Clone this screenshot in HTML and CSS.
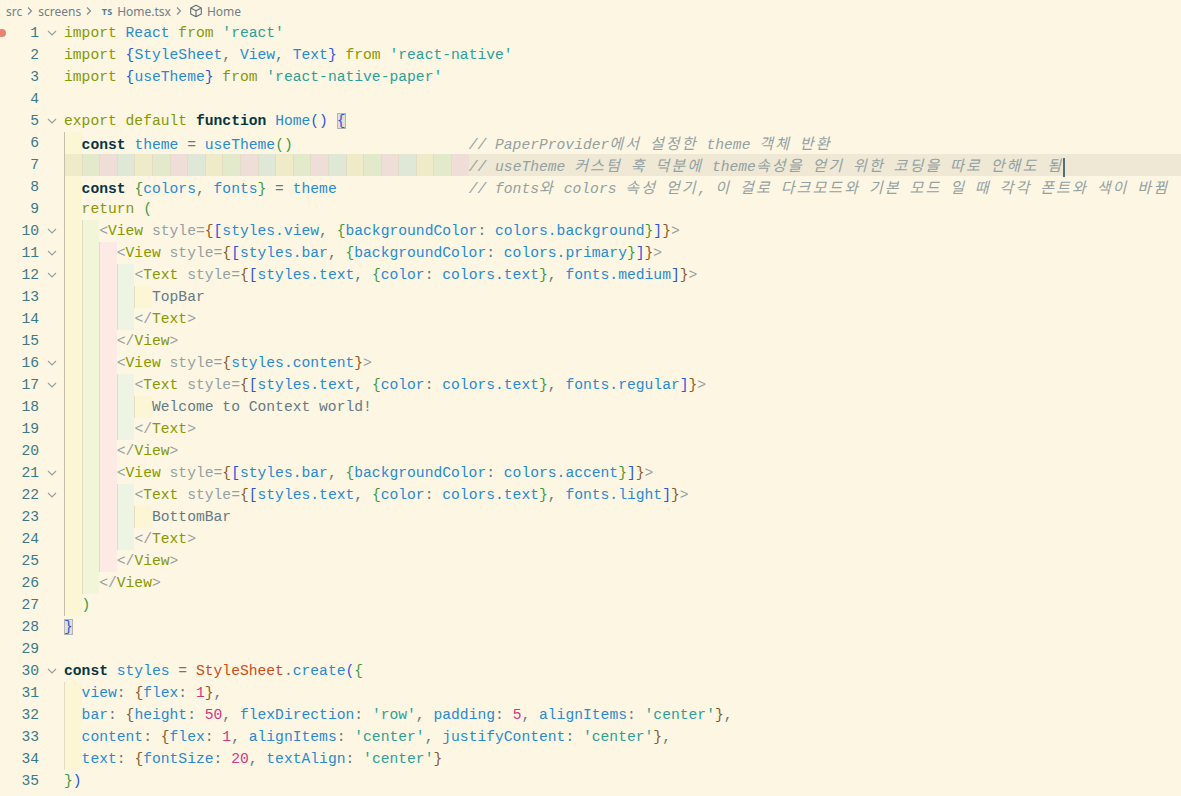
FILE: index.html
```html
<!DOCTYPE html>
<html lang="ko">
<head>
    <meta charset="UTF-8">
    <title>Home.tsx</title>
    <link rel="stylesheet" href="styles.css">
</head>
<body>
    <div class="crumbs">
        <span>src</span>
        <svg class="chev" width="16" height="10" viewBox="0 0 16 10"><path d="M6 1.5l3.5 3.5-3.5 3.5" fill="none" stroke="#7c8b90" stroke-width="1.1"/></svg>
        <span>screens</span>
        <svg class="chev" width="16" height="10" viewBox="0 0 16 10"><path d="M6 1.5l3.5 3.5-3.5 3.5" fill="none" stroke="#7c8b90" stroke-width="1.1"/></svg>
        <span class="ts">TS</span>
        <span>Home.tsx</span>
        <svg class="chev" width="16" height="10" viewBox="0 0 16 10"><path d="M6 1.5l3.5 3.5-3.5 3.5" fill="none" stroke="#7c8b90" stroke-width="1.1"/></svg>
        <svg class="cube" width="14" height="14" viewBox="0 0 14 14"><path d="M7 1.2l5.3 2.8v6L7 12.8 1.7 10V4zM1.7 4L7 6.8 12.3 4M7 6.8v6" fill="none" stroke="#5f6f74" stroke-width="1.1" stroke-linejoin="round"/></svg>
        <span>Home</span>
    </div>

    <div class="editor">
        <div class="ln"><div class="gut"><span class="bp"></span><span class="num">1</span><span class="fold"><svg width="10" height="6" viewBox="0 0 10 6"><path d="M1 1l4 4 4-4"/></svg></span></div><div class="code"><span class="k">import</span> <span class="v">React</span> <span class="k">from</span> <span class="q">'react'</span></div></div>
        <div class="ln"><div class="gut"><span class="num">2</span><span class="fold"></span></div><div class="code"><span class="k">import</span> <span class="b1">{</span><span class="v">StyleSheet</span>, <span class="v">View</span>, <span class="v">Text</span><span class="b1">}</span> <span class="k">from</span> <span class="q">'react-native'</span></div></div>
        <div class="ln"><div class="gut"><span class="num">3</span><span class="fold"></span></div><div class="code"><span class="k">import</span> <span class="b1">{</span><span class="v">useTheme</span><span class="b1">}</span> <span class="k">from</span> <span class="q">'react-native-paper'</span></div></div>
        <div class="ln"><div class="gut"><span class="num">4</span><span class="fold"></span></div><div class="code"></div></div>
        <div class="ln"><div class="gut"><span class="num">5</span><span class="fold"><svg width="10" height="6" viewBox="0 0 10 6"><path d="M1 1l4 4 4-4"/></svg></span></div><div class="code"><span class="k">export</span> <span class="k">default</span> <span class="s">function</span> <span class="v">Home</span><span class="b1">()</span> <span class="b1 match">{</span></div></div>
        <div class="ln"><div class="gut"><span class="num">6</span><span class="fold"></span></div><div class="code"><span class="ind i1 act"></span><span class="s">const</span> <span class="v">theme</span> = <span class="v">useTheme</span><span class="b2">()</span>                    <span class="c">// PaperProvider<span class="ko">에서</span> <span class="ko">설정한</span> theme <span class="ko">객체</span> <span class="ko">반환</span></span></div></div>
        <div class="ln cur"><div class="gut"><span class="num">7</span><span class="fold"></span></div><div class="code"><span class="ind i1 act"></span><span class="ind i2"></span><span class="ind i3"></span><span class="ind i4"></span><span class="ind i1"></span><span class="ind i2"></span><span class="ind i3"></span><span class="ind i4"></span><span class="ind i1"></span><span class="ind i2"></span><span class="ind i3"></span><span class="ind i4"></span><span class="ind i1"></span><span class="ind i2"></span><span class="ind i3"></span><span class="ind i4"></span><span class="ind i1"></span><span class="ind i2"></span><span class="ind i3"></span><span class="ind i4"></span><span class="ind i1"></span><span class="ind i2"></span><span class="ind i3"></span><span class="c">// useTheme <span class="ko">커스텀</span> <span class="ko">훅</span> <span class="ko">덕분에</span> theme<span class="ko">속성을</span> <span class="ko">얻기</span> <span class="ko">위한</span> <span class="ko">코딩을</span> <span class="ko">따로</span> <span class="ko">안해도</span> <span class="ko">됨</span></span><span class="caret"></span></div></div>
        <div class="ln"><div class="gut"><span class="num">8</span><span class="fold"></span></div><div class="code"><span class="ind i1 act"></span><span class="s">const</span> <span class="b2">{</span><span class="v">colors</span>, <span class="v">fonts</span><span class="b2">}</span> = <span class="v">theme</span>               <span class="c">// fonts<span class="ko">와</span> colors <span class="ko">속성</span> <span class="ko">얻기</span>, <span class="ko">이</span> <span class="ko">걸로</span> <span class="ko">다크모드와</span> <span class="ko">기본</span> <span class="ko">모드</span> <span class="ko">일</span> <span class="ko">때</span> <span class="ko">각각</span> <span class="ko">폰트와</span> <span class="ko">색이</span> <span class="ko">바뀜</span></span></div></div>
        <div class="ln"><div class="gut"><span class="num">9</span><span class="fold"></span></div><div class="code"><span class="ind i1 act"></span><span class="k">return</span> <span class="b2">(</span></div></div>
        <div class="ln"><div class="gut"><span class="num">10</span><span class="fold"><svg width="10" height="6" viewBox="0 0 10 6"><path d="M1 1l4 4 4-4"/></svg></span></div><div class="code"><span class="ind i1 act"></span><span class="ind i2"></span><span class="a">&lt;</span><span class="t">View</span> <span class="a">style=</span><span class="b3">{</span><span class="b1">[</span><span class="v">styles.view</span>, <span class="b2">{</span><span class="v">backgroundColor</span>: <span class="v">colors.background</span><span class="b2">}</span><span class="b1">]</span><span class="b3">}</span><span class="a">&gt;</span></div></div>
        <div class="ln"><div class="gut"><span class="num">11</span><span class="fold"><svg width="10" height="6" viewBox="0 0 10 6"><path d="M1 1l4 4 4-4"/></svg></span></div><div class="code"><span class="ind i1 act"></span><span class="ind i2"></span><span class="ind i3"></span><span class="a">&lt;</span><span class="t">View</span> <span class="a">style=</span><span class="b3">{</span><span class="b1">[</span><span class="v">styles.bar</span>, <span class="b2">{</span><span class="v">backgroundColor</span>: <span class="v">colors.primary</span><span class="b2">}</span><span class="b1">]</span><span class="b3">}</span><span class="a">&gt;</span></div></div>
        <div class="ln"><div class="gut"><span class="num">12</span><span class="fold"><svg width="10" height="6" viewBox="0 0 10 6"><path d="M1 1l4 4 4-4"/></svg></span></div><div class="code"><span class="ind i1 act"></span><span class="ind i2"></span><span class="ind i3"></span><span class="ind i4"></span><span class="a">&lt;</span><span class="t">Text</span> <span class="a">style=</span><span class="b3">{</span><span class="b1">[</span><span class="v">styles.text</span>, <span class="b2">{</span><span class="v">color</span>: <span class="v">colors.text</span><span class="b2">}</span>, <span class="v">fonts.medium</span><span class="b1">]</span><span class="b3">}</span><span class="a">&gt;</span></div></div>
        <div class="ln"><div class="gut"><span class="num">13</span><span class="fold"></span></div><div class="code"><span class="ind i1 act"></span><span class="ind i2"></span><span class="ind i3"></span><span class="ind i4"></span><span class="ind i1"></span>TopBar</div></div>
        <div class="ln"><div class="gut"><span class="num">14</span><span class="fold"></span></div><div class="code"><span class="ind i1 act"></span><span class="ind i2"></span><span class="ind i3"></span><span class="ind i4"></span><span class="a">&lt;/</span><span class="t">Text</span><span class="a">&gt;</span></div></div>
        <div class="ln"><div class="gut"><span class="num">15</span><span class="fold"></span></div><div class="code"><span class="ind i1 act"></span><span class="ind i2"></span><span class="ind i3"></span><span class="a">&lt;/</span><span class="t">View</span><span class="a">&gt;</span></div></div>
        <div class="ln"><div class="gut"><span class="num">16</span><span class="fold"><svg width="10" height="6" viewBox="0 0 10 6"><path d="M1 1l4 4 4-4"/></svg></span></div><div class="code"><span class="ind i1 act"></span><span class="ind i2"></span><span class="ind i3"></span><span class="a">&lt;</span><span class="t">View</span> <span class="a">style=</span><span class="b3">{</span><span class="v">styles.content</span><span class="b3">}</span><span class="a">&gt;</span></div></div>
        <div class="ln"><div class="gut"><span class="num">17</span><span class="fold"><svg width="10" height="6" viewBox="0 0 10 6"><path d="M1 1l4 4 4-4"/></svg></span></div><div class="code"><span class="ind i1 act"></span><span class="ind i2"></span><span class="ind i3"></span><span class="ind i4"></span><span class="a">&lt;</span><span class="t">Text</span> <span class="a">style=</span><span class="b3">{</span><span class="b1">[</span><span class="v">styles.text</span>, <span class="b2">{</span><span class="v">color</span>: <span class="v">colors.text</span><span class="b2">}</span>, <span class="v">fonts.regular</span><span class="b1">]</span><span class="b3">}</span><span class="a">&gt;</span></div></div>
        <div class="ln"><div class="gut"><span class="num">18</span><span class="fold"></span></div><div class="code"><span class="ind i1 act"></span><span class="ind i2"></span><span class="ind i3"></span><span class="ind i4"></span><span class="ind i1"></span>Welcome to Context world!</div></div>
        <div class="ln"><div class="gut"><span class="num">19</span><span class="fold"></span></div><div class="code"><span class="ind i1 act"></span><span class="ind i2"></span><span class="ind i3"></span><span class="ind i4"></span><span class="a">&lt;/</span><span class="t">Text</span><span class="a">&gt;</span></div></div>
        <div class="ln"><div class="gut"><span class="num">20</span><span class="fold"></span></div><div class="code"><span class="ind i1 act"></span><span class="ind i2"></span><span class="ind i3"></span><span class="a">&lt;/</span><span class="t">View</span><span class="a">&gt;</span></div></div>
        <div class="ln"><div class="gut"><span class="num">21</span><span class="fold"><svg width="10" height="6" viewBox="0 0 10 6"><path d="M1 1l4 4 4-4"/></svg></span></div><div class="code"><span class="ind i1 act"></span><span class="ind i2"></span><span class="ind i3"></span><span class="a">&lt;</span><span class="t">View</span> <span class="a">style=</span><span class="b3">{</span><span class="b1">[</span><span class="v">styles.bar</span>, <span class="b2">{</span><span class="v">backgroundColor</span>: <span class="v">colors.accent</span><span class="b2">}</span><span class="b1">]</span><span class="b3">}</span><span class="a">&gt;</span></div></div>
        <div class="ln"><div class="gut"><span class="num">22</span><span class="fold"><svg width="10" height="6" viewBox="0 0 10 6"><path d="M1 1l4 4 4-4"/></svg></span></div><div class="code"><span class="ind i1 act"></span><span class="ind i2"></span><span class="ind i3"></span><span class="ind i4"></span><span class="a">&lt;</span><span class="t">Text</span> <span class="a">style=</span><span class="b3">{</span><span class="b1">[</span><span class="v">styles.text</span>, <span class="b2">{</span><span class="v">color</span>: <span class="v">colors.text</span><span class="b2">}</span>, <span class="v">fonts.light</span><span class="b1">]</span><span class="b3">}</span><span class="a">&gt;</span></div></div>
        <div class="ln"><div class="gut"><span class="num">23</span><span class="fold"></span></div><div class="code"><span class="ind i1 act"></span><span class="ind i2"></span><span class="ind i3"></span><span class="ind i4"></span><span class="ind i1"></span>BottomBar</div></div>
        <div class="ln"><div class="gut"><span class="num">24</span><span class="fold"></span></div><div class="code"><span class="ind i1 act"></span><span class="ind i2"></span><span class="ind i3"></span><span class="ind i4"></span><span class="a">&lt;/</span><span class="t">Text</span><span class="a">&gt;</span></div></div>
        <div class="ln"><div class="gut"><span class="num">25</span><span class="fold"></span></div><div class="code"><span class="ind i1 act"></span><span class="ind i2"></span><span class="ind i3"></span><span class="a">&lt;/</span><span class="t">View</span><span class="a">&gt;</span></div></div>
        <div class="ln"><div class="gut"><span class="num">26</span><span class="fold"></span></div><div class="code"><span class="ind i1 act"></span><span class="ind i2"></span><span class="a">&lt;/</span><span class="t">View</span><span class="a">&gt;</span></div></div>
        <div class="ln"><div class="gut"><span class="num">27</span><span class="fold"></span></div><div class="code"><span class="ind i1 act"></span><span class="b2">)</span></div></div>
        <div class="ln"><div class="gut"><span class="num">28</span><span class="fold"></span></div><div class="code"><span class="b1 match">}</span></div></div>
        <div class="ln"><div class="gut"><span class="num">29</span><span class="fold"></span></div><div class="code"></div></div>
        <div class="ln"><div class="gut"><span class="num">30</span><span class="fold"><svg width="10" height="6" viewBox="0 0 10 6"><path d="M1 1l4 4 4-4"/></svg></span></div><div class="code"><span class="s">const</span> <span class="v">styles</span> = <span class="cl">StyleSheet</span>.<span class="v">create</span><span class="b1">(</span><span class="b2">{</span></div></div>
        <div class="ln"><div class="gut"><span class="num">31</span><span class="fold"></span></div><div class="code"><span class="ind i1"></span><span class="v">view</span>: <span class="b3">{</span><span class="v">flex</span>: <span class="n">1</span><span class="b3">}</span>,</div></div>
        <div class="ln"><div class="gut"><span class="num">32</span><span class="fold"></span></div><div class="code"><span class="ind i1"></span><span class="v">bar</span>: <span class="b3">{</span><span class="v">height</span>: <span class="n">50</span>, <span class="v">flexDirection</span>: <span class="q">'row'</span>, <span class="v">padding</span>: <span class="n">5</span>, <span class="v">alignItems</span>: <span class="q">'center'</span><span class="b3">}</span>,</div></div>
        <div class="ln"><div class="gut"><span class="num">33</span><span class="fold"></span></div><div class="code"><span class="ind i1"></span><span class="v">content</span>: <span class="b3">{</span><span class="v">flex</span>: <span class="n">1</span>, <span class="v">alignItems</span>: <span class="q">'center'</span>, <span class="v">justifyContent</span>: <span class="q">'center'</span><span class="b3">}</span>,</div></div>
        <div class="ln"><div class="gut"><span class="num">34</span><span class="fold"></span></div><div class="code"><span class="ind i1"></span><span class="v">text</span>: <span class="b3">{</span><span class="v">fontSize</span>: <span class="n">20</span>, <span class="v">textAlign</span>: <span class="q">'center'</span><span class="b3">}</span></div></div>
        <div class="ln"><div class="gut"><span class="num">35</span><span class="fold"></span></div><div class="code"><span class="b2">}</span><span class="b1">)</span></div></div>
    </div>
</body>
</html>
```

FILE: styles.css
```css
body {
    margin: 0;
    background-color: #fdf6e3;
    color: #657b83;
    overflow: hidden;
}

/* breadcrumbs */
.crumbs {
    height: 22px;
    display: flex;
    align-items: center;
    padding-left: 6px;
    font-family: "Noto Sans", "Open Sans", sans-serif;
    font-size: 12px;
    color: #6f8086;
}
.ts {
    width: 20px;
    text-align: center;
    font-size: 9px;
    font-weight: bold;
    color: #4f7f98;
    letter-spacing: 0.3px;
}
.cube {
    margin: 0 4px 0 2px;
}

/* editor */
.editor {
    font-family: "Liberation Mono", "Noto Sans CJK KR", monospace;
    font-size: 14.67px;
}
.ln {
    display: flex;
    height: 22px;
    line-height: 22px;
}
.gut {
    position: relative;
    flex: none;
    width: 64px;
    display: flex;
}
.num {
    width: 39px;
    text-align: right;
    color: #3a7a88;
}
.fold {
    width: 25px;
    display: flex;
    align-items: center;
    justify-content: center;
}
.fold path {
    fill: none;
    stroke: #93a1a1;
    stroke-width: 1.1;
}
.bp {
    position: absolute;
    left: -2px;
    top: 7px;
    width: 8px;
    height: 8px;
    border-radius: 50%;
    background-color: #e8816f;
}
.code {
    flex: 1;
    white-space: pre;
    min-width: 0;
}
.cur .code {
    background-color: #eee8d5;
}
.caret {
    display: inline-block;
    width: 2px;
    height: 19px;
    vertical-align: middle;
    background-color: #586e75;
}

/* indent rainbow + guides */
.ind {
    display: inline-block;
    width: 17.6px;
    height: 22px;
    vertical-align: top;
    box-sizing: border-box;
    border-left: 1px solid #e2dcc6;
}
.ind.act {
    border-left-color: #c4bfac;
}
.i1 { background-color: rgba(255, 255, 64, 0.09); }
.i2 { background-color: rgba(127, 255, 127, 0.09); }
.i3 { background-color: rgba(255, 127, 255, 0.09); }
.i4 { background-color: rgba(79, 236, 236, 0.09); }

/* tokens */
.k { color: #859900; }
.s { color: #073642; font-weight: bold; }
.v { color: #268bd2; }
.q { color: #2aa198; }
.n { color: #d33682; }
.cl { color: #cb4b16; }
.t { color: #859900; }
.a { color: #93a1a1; }
.c { color: #93a1a1; font-style: italic; }
.ko {
    font-family: "Noto Sans CJK KR", sans-serif;
    font-size: 15px;
    letter-spacing: 2.1px;
}
.b1 { color: #2c55e0; }
.b2 { color: #3e9a3e; }
.b3 { color: #8a5a2a; }
.match {
    background-color: #e4e0d4;
    outline: 1px solid #b4b4b4;
    outline-offset: -1px;
}
```
